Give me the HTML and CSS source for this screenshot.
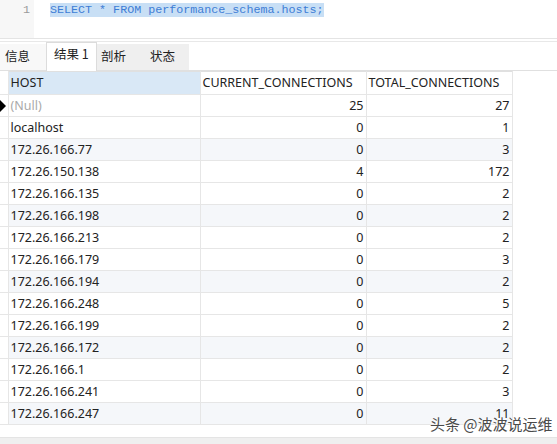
FILE: index.html
```html
<!DOCTYPE html>
<html>
<head>
<meta charset="utf-8">
<link rel="stylesheet" href="styles.css">
</head>
<body>
<div class="app">
  <div class="editor">
    <div class="gutter">1</div>
    <div class="code"><span class="sel">SELECT * FROM performance_schema.hosts;</span></div>
  </div>
  <div class="tabs">
    <div class="tab">信息</div>
    <div class="tab active">结果 1</div>
    <div class="tab dim">剖析</div>
    <div class="tab dim">状态</div>
  </div>
  <div class="grid-wrap">
    <table class="grid">
      <thead>
        <tr><th class="ind"></th><th class="host sorted">HOST</th><th class="cur">CURRENT_CONNECTIONS</th><th class="tot">TOTAL_CONNECTIONS</th></tr>
      </thead>
      <tbody>
        <tr><td class="ind"><span class="arrow"></span></td><td class="null">(Null)</td><td class="num">25</td><td class="num">27</td></tr>
        <tr><td class="ind"></td><td>localhost</td><td class="num">0</td><td class="num">1</td></tr>
        <tr><td class="ind"></td><td>172.26.166.77</td><td class="num">0</td><td class="num">3</td></tr>
        <tr><td class="ind"></td><td>172.26.150.138</td><td class="num">4</td><td class="num">172</td></tr>
        <tr><td class="ind"></td><td>172.26.166.135</td><td class="num">0</td><td class="num">2</td></tr>
        <tr><td class="ind"></td><td>172.26.166.198</td><td class="num">0</td><td class="num">2</td></tr>
        <tr><td class="ind"></td><td>172.26.166.213</td><td class="num">0</td><td class="num">2</td></tr>
        <tr><td class="ind"></td><td>172.26.166.179</td><td class="num">0</td><td class="num">3</td></tr>
        <tr><td class="ind"></td><td>172.26.166.194</td><td class="num">0</td><td class="num">2</td></tr>
        <tr><td class="ind"></td><td>172.26.166.248</td><td class="num">0</td><td class="num">5</td></tr>
        <tr><td class="ind"></td><td>172.26.166.199</td><td class="num">0</td><td class="num">2</td></tr>
        <tr><td class="ind"></td><td>172.26.166.172</td><td class="num">0</td><td class="num">2</td></tr>
        <tr><td class="ind"></td><td>172.26.166.1</td><td class="num">0</td><td class="num">2</td></tr>
        <tr><td class="ind"></td><td>172.26.166.241</td><td class="num">0</td><td class="num">3</td></tr>
        <tr><td class="ind"></td><td>172.26.166.247</td><td class="num">0</td><td class="num">11</td></tr>
      </tbody>
    </table>
  </div>
  <div class="bottom-bar"></div>
  <div class="watermark">头条 @波波说运维</div>
</div>
</body>
</html>
```

FILE: styles.css
```css
* { box-sizing: border-box; }
html, body { margin: 0; padding: 0; background: #fff; }
body {
  font-family: "Noto Sans", "Noto Sans CJK SC", sans-serif;
  font-size: 12.5px;
  color: #222;
}
.app {
  position: relative;
  width: 557px;
  height: 444px;
  overflow: hidden;
  display: flex;
  flex-direction: column;
}
.editor {
  height: 39px;
  display: flex;
  background: #fff;
  border-bottom: 1px solid #e4e4e4;
}
.gutter {
  width: 34px;
  background: #f7f7f7;
  color: #9a9a9a;
  font-family: "Liberation Mono", monospace;
  font-size: 11.7px;
  text-align: right;
  padding: 3px 4px 0 0;
  line-height: 15px;
}
.code {
  padding: 3px 0 0 16px;
  font-family: "Liberation Mono", monospace;
  font-size: 11.7px;
  line-height: 15px;
  color: #3d7dd6;
}
.sel { background: #c8dff5; }
.tabs {
  height: 30px;
  margin-top: 2px;
  display: flex;
  align-items: flex-end;
  background: #fff;
  border-top: 1px solid #e8e8e8;
  border-bottom: 1px solid #e0e0e0;
}
.tab {
  height: 26px;
  line-height: 24px;
  padding: 0 6px;
  font-family: "Noto Sans CJK SC", sans-serif;
  font-size: 12.5px;
  color: #222;
  background: #f8f8f8;
}
.tab:first-child { width: 46px; padding-left: 5px; }
.tab.active {
  background: #fff;
  width: 51px;
  height: 29px;
  line-height: 22px;
  padding-left: 7px;
  border: 1px solid #dcdcdc;
  border-bottom: none;
  margin-bottom: -1px;
}
.tab.dim { background: #efefef; width: 46px; padding-left: 4px; }
.tab.dim:last-child { padding-left: 7px; }
.grid-wrap {
  flex: 1;
}
.grid {
  border-collapse: collapse;
  table-layout: fixed;
  width: 512px;
}
.grid th, .grid td {
  height: 22px;
  padding: 0 2px;
  border: 1px solid #e6e6e6;
  font-weight: normal;
  white-space: nowrap;
  overflow: hidden;
  line-height: 20px;
}
.grid th {
  text-align: left;
  background: #fff;
  height: 23px;
  border-top: 1px solid #e0e0e0;
}
.grid th.sorted { background: #d9e8f6; }
.grid .ind { width: 8px; padding: 0; border-left: none; position: relative; }
.grid th.ind { border-top: none; }
.grid .host { width: 192px; }
.grid .cur { width: 166px; }
.grid .tot { width: 146px; }
.grid td.num { text-align: right; }
.grid td.null { color: #aaa; }
.grid tbody tr:nth-child(3n) td { background: #f5f7fa; }
.grid tbody tr td.ind { background: #fff; }
.arrow {
  display: block;
  width: 0; height: 0;
  border-top: 6px solid transparent;
  border-bottom: 6px solid transparent;
  border-left: 6px solid #000;
}
.bottom-bar {
  height: 7px;
  background: #efefef;
  border-top: 1px solid #e4e4e4;
}
.watermark {
  position: absolute;
  left: 430px;
  top: 413px;
  font-family: "Noto Sans CJK SC", sans-serif;
  font-size: 15px;
  color: #4a4a4a;
  text-shadow: 0 0 2px #fff, 0 0 2px #fff;
}
```
